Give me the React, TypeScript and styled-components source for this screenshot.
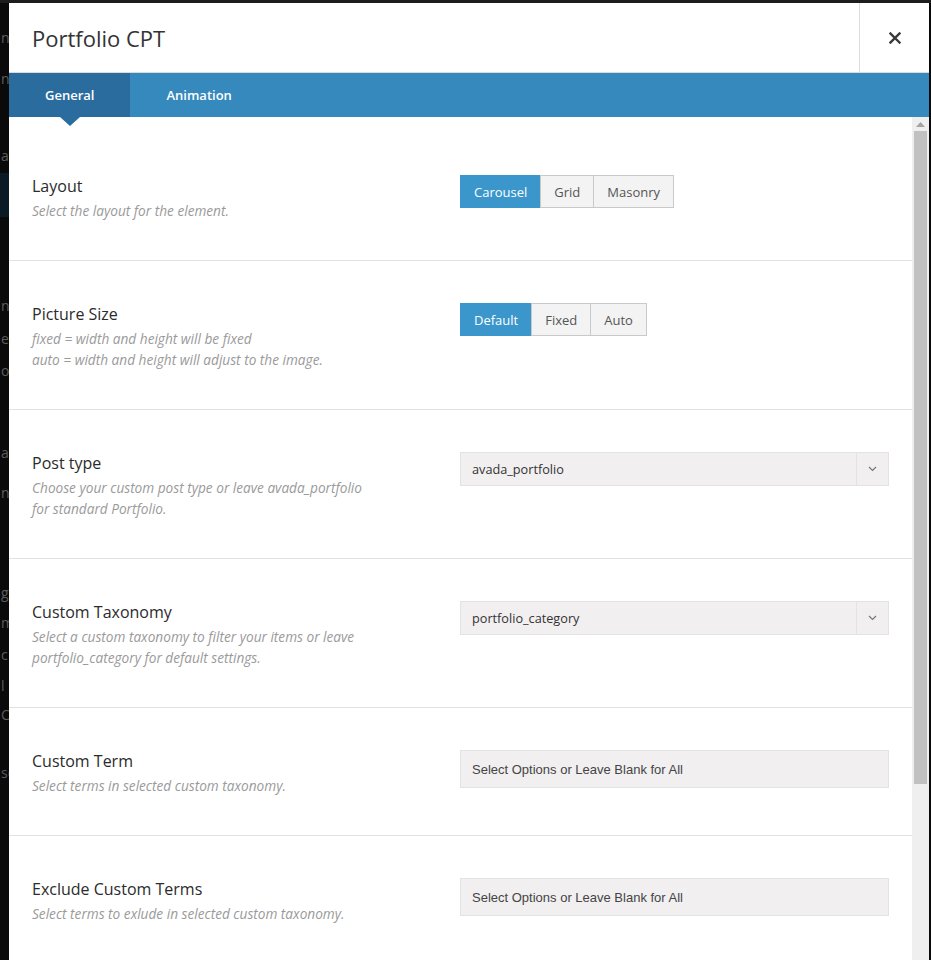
import React from "react";
import styled, { createGlobalStyle } from "styled-components";

const Global = createGlobalStyle`
  html, body { margin: 0; padding: 0; height: 100%; }
  body {
    background: #0b0b0b;
    overflow: hidden;
    font-family: "Open Sans", "Noto Sans", sans-serif;
  }
`;

const Backdrop = styled.div`
  height: 960px;
  width: 931px;
  background: #0a0a0a;
  border-top: 3px solid #1d1d1d;
  box-sizing: border-box;
`;

const AdminMenu = styled.ul`
  list-style: none;
  margin: 0;
  padding: 0;
  width: 40px;
`;

const AdminItem = styled.li<{ $gap: number; $active?: boolean }>`
  display: flex;
  white-space: nowrap;
  margin-top: ${(p) => p.$gap}px;
  height: ${(p) => (p.$active ? 44 : 20)}px;
  align-items: center;
  padding-left: 1px;
  font-size: 14px;
  color: #5c5c5c;
  background: ${(p) => (p.$active ? "#0b1b26" : "transparent")};
`;

const Modal = styled.div`
  position: fixed;
  top: 3px;
  left: 9px;
  width: 920px;
  bottom: 0;
  background: #fff;
  display: flex;
  flex-direction: column;
`;

const Header = styled.header`
  height: 69px;
  flex: 0 0 69px;
  display: flex;
  align-items: stretch;
  border-bottom: 1px solid #dcdcdc;
`;

const Title = styled.h2`
  flex: 1;
  margin: 0;
  padding-left: 23px;
  display: flex;
  align-items: center;
  font-size: 22px;
  font-weight: 400;
  color: #333;
`;

const CloseButton = styled.button`
  width: 70px;
  border: none;
  border-left: 1px solid #dcdcdc;
  background: #fff;
  display: flex;
  align-items: center;
  justify-content: center;
  padding: 0;
  cursor: pointer;
`;

const TabBar = styled.nav`
  height: 44px;
  flex: 0 0 44px;
  background: #3589bd;
  display: flex;
`;

const Tab = styled.div<{ $active?: boolean }>`
  position: relative;
  display: flex;
  align-items: center;
  padding: 0 36px;
  font-size: 13px;
  font-weight: 600;
  color: #fff;
  background: ${(p) => (p.$active ? "#2b6c9f" : "transparent")};

  ${(p) =>
    p.$active &&
    `
    &::after {
      content: "";
      position: absolute;
      left: 50%;
      bottom: -9px;
      margin-left: -10px;
      border-left: 10px solid transparent;
      border-right: 10px solid transparent;
      border-top: 9px solid #2b6c9f;
      z-index: 2;
    }
  `}
`;

const Body = styled.div`
  flex: 1;
  min-height: 0;
  display: flex;
`;

const Content = styled.div`
  flex: 1;
  overflow: hidden;
  padding-top: 16px;
`;

const Row = styled.section`
  display: grid;
  grid-template-columns: 428px 1fr;
  padding: 42px 23px 39px;
  border-bottom: 1px solid #e2e2e2;
  align-items: start;
`;

const Label = styled.h3`
  margin: 0 0 3px;
  font-size: 16px;
  line-height: 22px;
  font-weight: 400;
  color: #2b2b2b;
`;

const Desc = styled.p`
  margin: 0;
  font-size: 13.65px;
  line-height: 21px;
  font-style: italic;
  color: #9a9a9a;
`;

const ButtonSet = styled.div`
  display: flex;
`;

const SetButton = styled.button<{ $active?: boolean }>`
  height: 33px;
  padding: 0 13px;
  font-family: "Open Sans", sans-serif;
  font-size: 13px;
  border: 1px solid ${(p) => (p.$active ? "#3a96cb" : "#c9c9c9")};
  margin-left: -1px;
  &:first-child { margin-left: 0; }
  background: ${(p) => (p.$active ? "#3a96cb" : "#f3f3f3")};
  color: ${(p) => (p.$active ? "#fff" : "#555")};
`;

const Select = styled.div`
  height: 34px;
  box-sizing: border-box;
  border: 1px solid #e3e3e3;
  background: #f1eff0;
  display: flex;
  align-items: stretch;
`;

const SelectValue = styled.span`
  flex: 1;
  display: flex;
  align-items: center;
  padding-left: 11px;
  font-size: 12.7px;
  color: #333;
`;

const SelectArrow = styled.span`
  width: 31px;
  border-left: 1px solid #e3e3e3;
  display: flex;
  align-items: center;
  justify-content: center;
`;

const MultiInput = styled.div`
  height: 38px;
  box-sizing: border-box;
  border: 1px solid #e3e3e3;
  background: #f1eff0;
  display: flex;
  align-items: center;
  padding-left: 11px;
  font-family: "Liberation Sans", Arial, sans-serif;
  font-size: 13px;
  color: #444;
`;

const ScrollTrack = styled.div`
  width: 17px;
  flex: 0 0 17px;
  background: #efefef;
  display: flex;
  flex-direction: column;
  align-items: center;
`;

const ScrollArrow = styled.div`
  height: 14px;
  display: flex;
  align-items: center;
  justify-content: center;
`;

const ScrollThumb = styled.div`
  width: 13px;
  height: 653px;
  background: #c1c1c1;
`;

type Control =
  | { kind: "buttons"; options: string[]; active: number }
  | { kind: "select"; value: string }
  | { kind: "multi"; placeholder: string };

const rows: { label: string; desc: string[]; control: Control }[] = [
  {
    label: "Layout",
    desc: ["Select the layout for the element."],
    control: { kind: "buttons", options: ["Carousel", "Grid", "Masonry"], active: 0 },
  },
  {
    label: "Picture Size",
    desc: ["fixed = width and height will be fixed", "auto = width and height will adjust to the image."],
    control: { kind: "buttons", options: ["Default", "Fixed", "Auto"], active: 0 },
  },
  {
    label: "Post type",
    desc: ["Choose your custom post type or leave avada_portfolio", "for standard Portfolio."],
    control: { kind: "select", value: "avada_portfolio" },
  },
  {
    label: "Custom Taxonomy",
    desc: ["Select a custom taxonomy to filter your items or leave", "portfolio_category for default settings."],
    control: { kind: "select", value: "portfolio_category" },
  },
  {
    label: "Custom Term",
    desc: ["Select terms in selected custom taxonomy."],
    control: { kind: "multi", placeholder: "Select Options or Leave Blank for All" },
  },
  {
    label: "Exclude Custom Terms",
    desc: ["Select terms to exlude in selected custom taxonomy."],
    control: { kind: "multi", placeholder: "Select Options or Leave Blank for All" },
  },
];

const adminItems: { text: string; gap: number; active?: boolean }[] = [
  { text: "n", gap: 24 },
  { text: "n", gap: 21 },
  { text: "a", gap: 57 },
  { text: "", gap: 8, active: true },
  { text: "ne", gap: 78 },
  { text: "es", gap: 13 },
  { text: "oli", gap: 12 },
  { text: "ar", gap: 62 },
  { text: "ns", gap: 20 },
  { text: "g", gap: 80 },
  { text: "m", gap: 10 },
  { text: "c S", gap: 12 },
  { text: "l", gap: 11 },
  { text: "Co", gap: 9 },
  { text: "se", gap: 38 },
];

const Chevron = () => (
  <svg width="9" height="6" viewBox="0 0 9 6">
    <polyline points="1,1 4.5,4.5 8,1" fill="none" stroke="#777" strokeWidth="1.2" />
  </svg>
);

const CloseIcon = () => (
  <svg width="12" height="12" viewBox="0 0 12 12">
    <path d="M1.5 1.5 L10.5 10.5 M10.5 1.5 L1.5 10.5" stroke="#3a3a3a" strokeWidth="2.4" strokeLinecap="square" />
  </svg>
);

const UpArrow = () => (
  <svg width="9" height="5" viewBox="0 0 9 5">
    <polygon points="0,5 4.5,0 9,5" fill="#a3a3a3" />
  </svg>
);

function renderControl(c: Control) {
  if (c.kind === "buttons") {
    return (
      <ButtonSet>
        {c.options.map((o, i) => (
          <SetButton key={o} $active={i === c.active}>
            {o}
          </SetButton>
        ))}
      </ButtonSet>
    );
  }
  if (c.kind === "select") {
    return (
      <Select>
        <SelectValue>{c.value}</SelectValue>
        <SelectArrow>
          <Chevron />
        </SelectArrow>
      </Select>
    );
  }
  return <MultiInput>{c.placeholder}</MultiInput>;
}

export default function App() {
  return (
    <>
      <Global />
      <Backdrop>
        <AdminMenu>
          {adminItems.map((a, i) => (
            <AdminItem key={i} $gap={a.gap} $active={a.active}>
              {a.text}
            </AdminItem>
          ))}
        </AdminMenu>
      </Backdrop>
      <Modal>
        <Header>
          <Title>Portfolio CPT</Title>
          <CloseButton aria-label="Close">
            <CloseIcon />
          </CloseButton>
        </Header>
        <TabBar>
          <Tab $active>General</Tab>
          <Tab>Animation</Tab>
        </TabBar>
        <Body>
          <Content>
            {rows.map((r) => (
              <Row key={r.label}>
                <div>
                  <Label>{r.label}</Label>
                  <Desc>
                    {r.desc.map((l, i) => (
                      <React.Fragment key={i}>
                        {i > 0 && <br />}
                        {l}
                      </React.Fragment>
                    ))}
                  </Desc>
                </div>
                <div>{renderControl(r.control)}</div>
              </Row>
            ))}
          </Content>
          <ScrollTrack>
            <ScrollArrow>
              <UpArrow />
            </ScrollArrow>
            <ScrollThumb />
          </ScrollTrack>
        </Body>
      </Modal>
    </>
  );
}
